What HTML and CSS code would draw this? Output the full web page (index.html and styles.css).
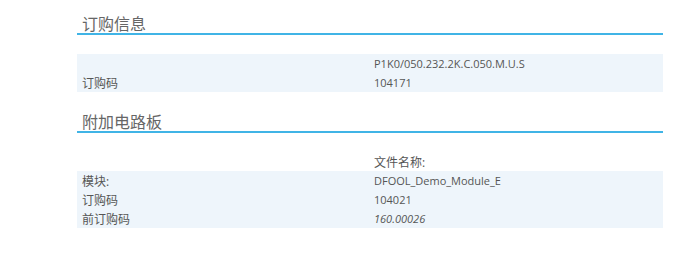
FILE: index.html
```html
<!DOCTYPE html>
<html lang="zh">
<head>
<meta charset="utf-8">
<link rel="stylesheet" href="styles.css">
</head>
<body>
<div class="wrap">
  <section class="sec sec-first">
    <h2 class="title">订购信息</h2>
    <div class="rows">
      <div class="row tint"><span class="lbl"></span><span class="val">P1K0/050.232.2K.C.050.M.U.S</span></div>
      <div class="row tint"><span class="lbl">订购码</span><span class="val">104171</span></div>
    </div>
  </section>
  <section class="sec sec-second">
    <h2 class="title">附加电路板</h2>
    <div class="rows">
      <div class="row"><span class="lbl"></span><span class="val cjk">文件名称:</span></div>
      <div class="row tint"><span class="lbl">模块:</span><span class="val">DFOOL_Demo_Module_E</span></div>
      <div class="row tint"><span class="lbl">订购码</span><span class="val">104021</span></div>
      <div class="row tint"><span class="lbl">前订购码</span><span class="val ital">160.00026</span></div>
    </div>
  </section>
</div>
</body>
</html>
```
FILE: styles.css
```css
html, body {
  margin: 0;
  padding: 0;
  background: #ffffff;
}
body {
  font-family: "Open Sans", "Noto Sans CJK SC", sans-serif;
  color: #555555;
}
.wrap {
  margin-left: 77px;
  width: 586px;
}
.title {
  margin: 0;
  padding: 6px 0 0 5px;
  font-size: 16px;
  font-weight: normal;
  line-height: 18px;
  color: #666666;
  border-bottom: 2px solid #40b4e6;
}
.sec-first .title {
  margin-top: 9px;
}
.sec-second .title {
  margin-top: 15px;
}
.rows {
  margin-top: 19px;
  display: flex;
  flex-direction: column;
}
.row {
  display: flex;
  height: 19px;
  align-items: center;
  font-size: 11px;
}
.row.tint {
  background: #eef5fb;
}
.lbl {
  width: 297px;
  padding-left: 5px;
  box-sizing: border-box;
  flex: none;
  font-size: 12px;
}
.val {
  flex: 1;
}
.cjk {
  font-size: 12px;
}
.ital {
  font-style: italic;
}
```
